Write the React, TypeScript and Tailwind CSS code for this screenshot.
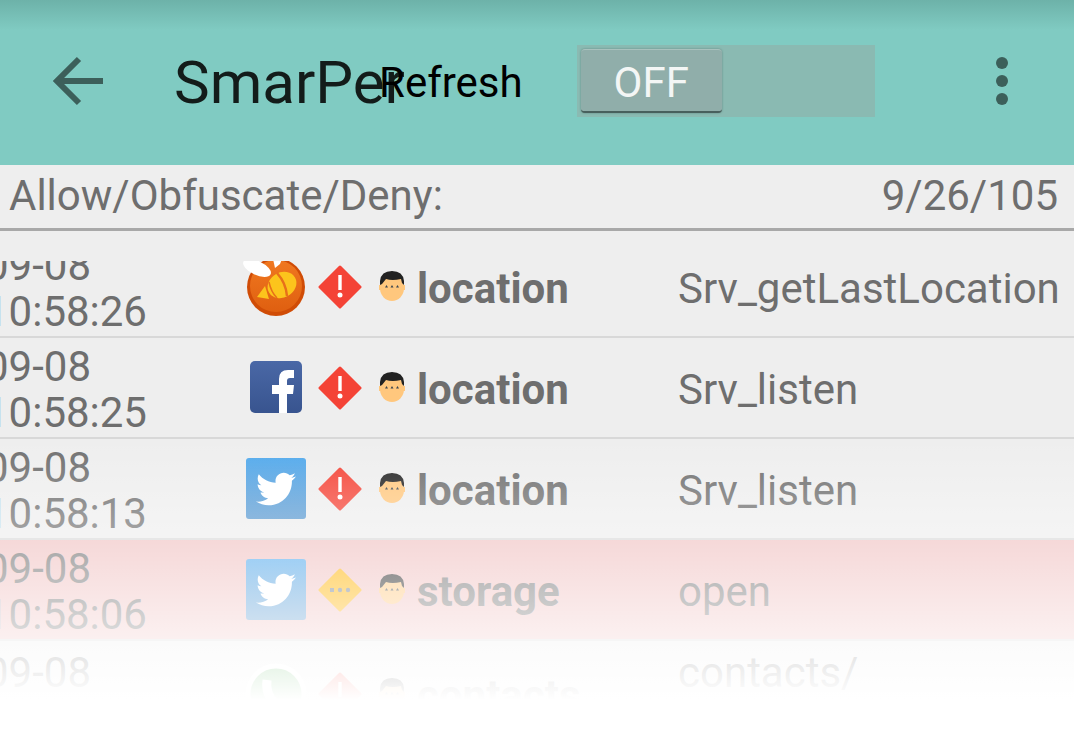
import { FaTwitter } from "react-icons/fa";

const font = { fontFamily: "Roboto, sans-serif" };

function BeeIcon() {
  return (
    <svg width="64" height="60" viewBox="0 0 64 60" className="overflow-visible">
      <defs>
        <linearGradient id="bee" x1="0" y1="0" x2="0" y2="1">
          <stop offset="0" stopColor="#f07820" />
          <stop offset="1" stopColor="#df5f10" />
        </linearGradient>
      </defs>
      <g transform="translate(0 1)">
        <circle cx="32" cy="29" r="29" fill="#d04c06" />
        <circle cx="32" cy="28" r="26" fill="url(#bee)" />
        <ellipse cx="38" cy="27" rx="15" ry="12.500" transform="rotate(-30 38 27)" fill="#fcc41c" />
        <path d="M13 39L21 28L25 41z" fill="#fcc41c" />
        <path d="M25 24Q27 34 33 40" stroke="#e8701a" strokeWidth="1.500" fill="none" />
        <path d="M33 15Q42 25 43 38" stroke="#e8701a" strokeWidth="2.500" fill="none" />
        <ellipse cx="13" cy="10" rx="15" ry="7" transform="rotate(25 13 10)" fill="#fff" />
        <path d="M29 1h9l-2 5-5 4z" fill="#fff" />
      </g>
    </svg>
  );
}

function FacebookIcon() {
  return (
    <svg width="52" height="52" viewBox="0 0 52 52" className="mt-[-2px] overflow-hidden rounded-[5px]">
      <defs>
        <linearGradient id="fb" x1="0" y1="0" x2="0" y2="1">
          <stop offset="0" stopColor="#4a68a6" />
          <stop offset="1" stopColor="#38548f" />
        </linearGradient>
      </defs>
      <rect width="52" height="52" fill="url(#fb)" />
      <path d="M29 52V33H22V24H29V18Q29 9 38 9H44V17H40Q37 17 37 20V24H44L43 33H37V52z" fill="#fff" />
    </svg>
  );
}

function TwitterIcon() {
  return (
    <div className="flex h-[61px] w-[60px] items-center justify-center rounded-[3px] bg-gradient-to-b from-[#4fa8ec] to-[#5797cf]">
      <FaTwitter className="h-[40px] w-[40px] text-white" />
    </div>
  );
}

function WhatsappIcon() {
  return (
    <svg width="62" height="62" viewBox="0 0 62 62">
      <circle cx="31" cy="31" r="28" fill="#4cb050" stroke="#fff" strokeWidth="5" />
      <path d="M22 17Q20 32 31 41l8 3" stroke="#fff" strokeWidth="9" fill="none" />
    </svg>
  );
}

function Diamond({ kind }: { kind: "danger" | "warn" }) {
  const fill = kind === "danger" ? "#f44336" : "#ffb300";
  return (
    <svg width="44" height="44" viewBox="0 0 44 44">
      <path d="M22 2L42 22L22 42L2 22z" fill={fill} stroke={fill} strokeWidth="3" strokeLinejoin="round" />
      {kind === "danger" ? (
        <>
          <rect x="20.300" y="10" width="3.400" height="15" fill="#fff" />
          <circle cx="22" cy="30" r="2.500" fill="#fff" />
        </>
      ) : (
        <>
          <rect x="12" y="20" width="4" height="4" fill="#6f7b8c" />
          <circle cx="22" cy="22" r="2.200" fill="#6f7b8c" />
          <circle cx="30" cy="22" r="2.200" fill="#6f7b8c" />
        </>
      )}
    </svg>
  );
}

function Face() {
  return (
    <svg width="28" height="32" viewBox="0 0 28 32">
      <path d="M1 15h26v5H1z" fill="#ffc77d" />
      <ellipse cx="14" cy="18" rx="12" ry="13" fill="#ffc77d" />
      <path d="M2 15V11Q3 1 14 1 25 1 26 11v4l-2-2-1-4Q14 11 8 9L4 14z" fill="#222" />
      <path d="M7 17.500l1.500-2.500 1.500 2.500zM12.500 17.500l1.500-2.500 1.500 2.500zM18 17.500l1.500-2.500 1.500 2.500z" fill="#3d4650" />
    </svg>
  );
}

type Row = {
  date: string;
  time: string;
  icon: React.ReactNode;
  level: "danger" | "warn";
  perm: string;
  op: string;
  tint?: boolean;
  tall?: boolean;
};

const rows: Row[] = [
  { date: "09-08", time: "10:58:26", icon: <BeeIcon />, level: "danger", perm: "location", op: "Srv_getLastLocation" },
  { date: "09-08", time: "10:58:25", icon: <FacebookIcon />, level: "danger", perm: "location", op: "Srv_listen" },
  { date: "09-08", time: "10:58:13", icon: <TwitterIcon />, level: "danger", perm: "location", op: "Srv_listen" },
  { date: "09-08", time: "10:58:06", icon: <TwitterIcon />, level: "warn", perm: "storage", op: "open", tint: true },
  { date: "09-08", time: "10:58:01", icon: <WhatsappIcon />, level: "danger", perm: "contacts", op: "contacts/ people", tall: true },
];

function LogRow({ row }: { row: Row }) {
  return (
    <div className={`flex shrink-0 items-center border-b-2 border-[#d8d8d8] ${row.tall ? "h-[107px]" : "h-[101px]"} ${row.tint ? "bg-[#f0c0c0]" : ""}`}>
      <div className="ml-[-15px] w-[256px] shrink-0 pt-[4px] text-[42px] leading-[46px] text-[#6e6e6e]">
        <div>{row.date}</div>
        <div>{row.time}</div>
      </div>
      <div className="flex w-[70px] shrink-0 justify-center">{row.icon}</div>
      <div className="ml-[5px] flex w-[47px] shrink-0 justify-center">
        <Diamond kind={row.level} />
      </div>
      <div className="ml-[7px] mt-[-2px] flex w-[44px] shrink-0 justify-center">
        <Face />
      </div>
      <div className="ml-[3px] w-[261px] shrink-0 pt-[4px] text-[42px] font-bold text-[#6e6e6e]">{row.perm}</div>
      <div className="w-[300px] pt-[4px] text-[42px] leading-[46px] text-[#6e6e6e]">{row.op}</div>
    </div>
  );
}

export default function App() {
  return (
    <div className="relative h-[750px] w-[1074px] overflow-hidden bg-white" style={font}>
      <header className="flex h-[165px] items-center bg-gradient-to-b from-[#6db2a9] via-[#80cbc2] via-[30px] to-[#80cbc2] pb-[3px]">
        <svg className="ml-[53px] shrink-0" width="50" height="50" viewBox="0 0 50 50">
          <path d="M50 25H4M26 3L4 25l22 22" fill="none" stroke="#3c5f5a" strokeWidth="6" />
        </svg>
        <div className="ml-[71px] mt-[4px] w-[205px] shrink-0 whitespace-nowrap text-[60px] text-[#131c1a]">SmarPer</div>
        <div className="mt-[2px] shrink-0 text-[42px] text-black">Refresh</div>
        <div className="ml-[54px] flex h-[72px] w-[298px] shrink-0 items-center bg-[#8abab2] pl-[4px]">
          <div className="flex h-[64px] w-[141px] items-center justify-center rounded-[4px] border-t border-b-2 border-t-[#a9c2be] border-b-[#48605d] bg-[#90aeaa] pt-[4px] text-[42px] text-[#f3f6f5] shadow-[0_0_2px_rgba(60,90,85,0.6)]">
            OFF
          </div>
        </div>
        <div className="ml-[121px] flex flex-col gap-[6px]">
          <div className="h-3 w-3 rounded-full bg-[#3c5f5a]" />
          <div className="h-3 w-3 rounded-full bg-[#3c5f5a]" />
          <div className="h-3 w-3 rounded-full bg-[#3c5f5a]" />
        </div>
      </header>

      <div className="flex h-[66px] items-center justify-between border-b-[3px] border-[#a8a8a8] bg-[#eeeeee] pb-[2px] pl-[9px] pr-[16px] text-[42px] text-[#6e6e6e]">
        <span>Allow/Obfuscate/Deny:</span>
        <span>9/26/105</span>
      </div>

      {/* first row is scrolled partly under the top edge of the list */}
      <div className="h-[519px] bg-[#eeeeee] pt-[30px]">
        <div className="h-[489px] overflow-hidden">
          <div className="mt-[-24px] flex flex-col">
            {rows.map((row, i) => (
              <LogRow key={i} row={row} />
            ))}
          </div>
        </div>
      </div>

      {/* list fades out to white towards the bottom */}
      <div className="pointer-events-none absolute inset-x-0 bottom-0 top-[438px] bg-gradient-to-b from-white/0 to-white to-[262px]" />
    </div>
  );
}
